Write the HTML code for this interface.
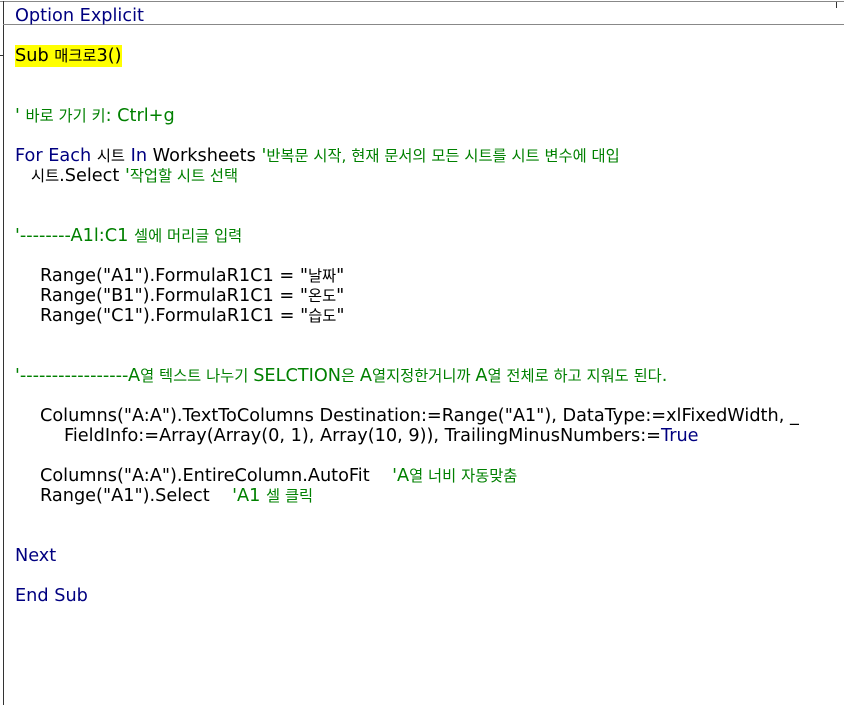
<!DOCTYPE html>
<html><head><meta charset="utf-8"><style>
body{margin:0;width:844px;height:705px;background:#fff;overflow:hidden;position:relative;font-family:"DejaVu Sans","Noto Sans CJK KR",sans-serif;font-size:17.7px;}
.l{position:absolute;height:20px;line-height:20px;white-space:pre;color:#000;}
.k{color:#000080}.c{color:#008000}
.hl{background:#ffff00;padding:1px 0}
.h{font-size:15.3px}
</style></head><body>
<div style="position:absolute;left:0;top:1px;width:844px;height:1px;background:#888"></div>
<div style="position:absolute;left:3px;top:1px;width:1px;height:704px;background:#333"></div>
<div style="position:absolute;left:3px;top:24px;width:841px;height:1px;background:#888"></div>
<div style="position:absolute;left:0;top:55px;width:4px;height:1px;background:#333"></div>
<div style="position:absolute;left:836px;top:2px;width:1px;height:6px;background:#333"></div>
<div class="l k" style="left:15px;top:6px">Option Explicit</div>
<div class="l" style="left:15px;top:46px"><span class="hl">Sub <span class="h">매크로</span>3()</span></div>
<div class="l c" style="left:15px;top:106px">' <span class="h">바로 가기 키</span>: Ctrl+g</div>
<div class="l" style="left:15px;top:146px"><span class="k">For Each</span> <span class="h">시트</span> <span class="k">In</span> Worksheets <span class="c">'<span class="h">반복문 시작, 현재 문서의 모든 시트를 시트 변수에 대입</span></span></div>
<div class="l" style="left:31px;top:166px"><span class="h">시트</span>.Select <span class="c">'<span class="h">작업할 시트 선택</span></span></div>
<div class="l c" style="left:15px;top:226px">'--------A1l:C1 <span class="h">셀에 머리글 입력</span></div>
<div class="l" style="left:40px;top:266px">Range("A1").FormulaR1C1 = "<span class="h">날짜</span>"</div>
<div class="l" style="left:40px;top:286px">Range("B1").FormulaR1C1 = "<span class="h">온도</span>"</div>
<div class="l" style="left:40px;top:306px">Range("C1").FormulaR1C1 = "<span class="h">습도</span>"</div>
<div class="l c" style="left:15px;top:366px">'-----------------A<span class="h">열 텍스트 나누기 </span>SELCTION<span class="h">은 </span>A<span class="h">열지정한거니까 </span>A<span class="h">열 전체로 하고 지워도 된다</span>.</div>
<div class="l" style="left:40px;top:406px">Columns("A:A").TextToColumns Destination:=Range("A1"), DataType:=xlFixedWidth, _</div>
<div class="l" style="left:64px;top:426px">FieldInfo:=Array(Array(0, 1), Array(10, 9)), TrailingMinusNumbers:=<span class="k">True</span></div>
<div class="l" style="left:40px;top:466px">Columns("A:A").EntireColumn.AutoFit    <span class="c">'A<span class="h">열 너비 자동맞춤</span></span></div>
<div class="l" style="left:40px;top:486px">Range("A1").Select    <span class="c">'A1 <span class="h">셀 클릭</span></span></div>
<div class="l k" style="left:15px;top:546px">Next</div>
<div class="l k" style="left:15px;top:586px">End Sub</div>
</body></html>
